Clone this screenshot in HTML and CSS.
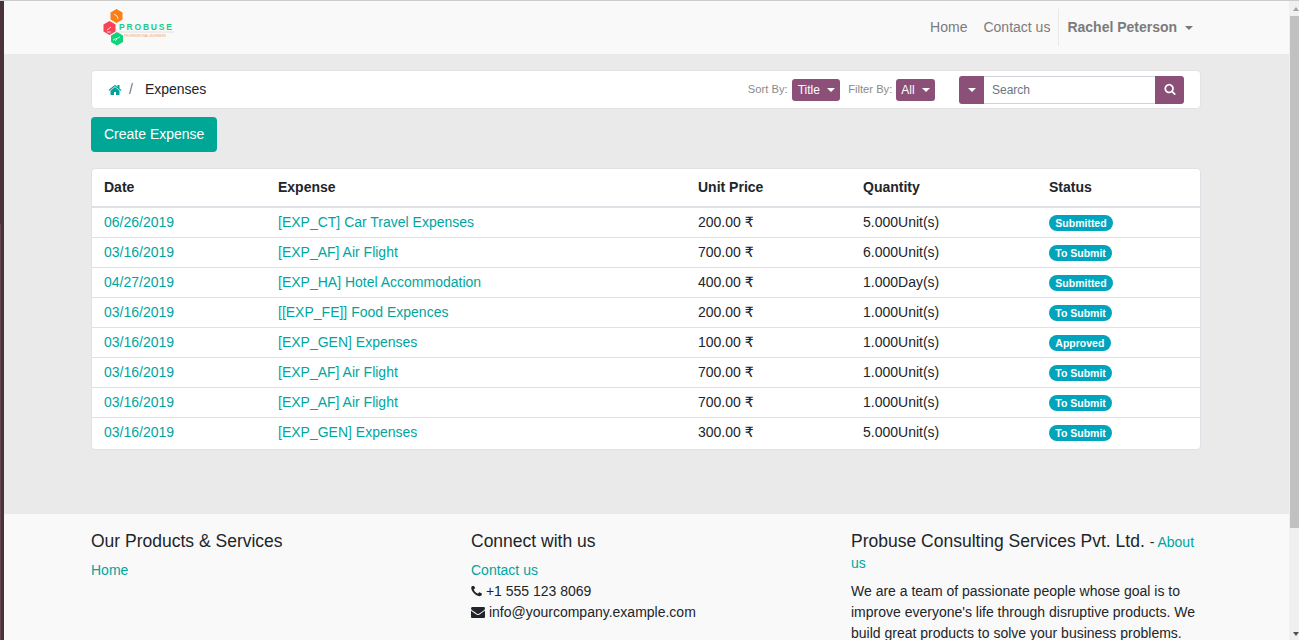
FILE: index.html
```html
<!DOCTYPE html>
<html lang="en">
<head>
  <meta charset="UTF-8">
  <title>Expenses</title>
  <link rel="stylesheet" href="styles.css">
</head>
<body>

<div class="top-edge"></div>
<div class="shell">
  <div class="left-edge"><div class="left-edge-top"></div><div class="left-edge-bottom"></div></div>

  <div class="page">
    <header class="navbar">
      <div class="container navbar-inner">
        <a class="logo" href="#">
          <svg width="72" height="40" viewBox="0 0 72 40">
            <polygon points="13.500,1 19.500,4.500 19.500,11.500 13.500,15 7.500,11.500 7.500,4.500" fill="#fd7e14"/>
            <polygon points="6.500,13 12.500,16.500 12.500,23.500 6.500,27 0.500,23.500 0.500,16.500" fill="#fb4155"/>
            <polygon points="14,24 20,27.500 20,34 14,37.500 8,34 8,27.500" fill="#12d27a"/>
            <path d="M11 6l3 2 1 3M4 22l4-3M4 24h4M10 32l7-3M12 33l2-2" stroke="#fff" stroke-width="1" fill="none" opacity="0.8"/>
            <text class="logo-name" x="16" y="22" textLength="53" lengthAdjust="spacing">PROBUSE</text>
            <line x1="15" y1="24" x2="71" y2="24" stroke="#ddd" stroke-width="0.8"/>
            <text class="logo-tag" x="21" y="28.500" textLength="42" lengthAdjust="spacingAndGlyphs">PROFESSIONAL BUSINESS</text>
          </svg>
        </a>
        <nav class="nav-links">
          <a href="#">Home</a>
          <a href="#">Contact us</a>
          <span class="nav-divider"></span>
          <a class="nav-user" href="#">Rachel Peterson <i class="caret caret-grey"></i></a>
        </nav>
      </div>
    </header>

    <main class="content">
      <div class="container">
        <div class="toolbar">
          <div class="crumbs">
            <svg class="icon-home" viewBox="0 0 1792 1792"><path d="M1472 992v480q0 26-19 45t-45 19h-384v-384h-256v384h-384q-26 0-45-19t-19-45v-480q0-1 .5-3t.5-3l575-474 575 474q1 2 1 6zm223-69l-62 74q-8 9-21 11h-3q-13 0-21-7l-692-577-692 577q-12 8-24 7-13-2-21-11l-62-74q-8-10-7-23.500t11-21.500l719-599q32-26 76-26t76 26l244 204v-195q0-14 9-23t23-9h192q14 0 23 9t9 23v408l219 182q10 8 11 21.500t-7 23.500z"/></svg>
            <span class="crumb-sep">/</span>
            <span>Expenses</span>
          </div>
          <div class="filters">
            <span class="filter-label">Sort By:</span>
            <button class="pill pill-title">Title <i class="caret"></i></button>
            <span class="filter-label filter-second">Filter By:</span>
            <button class="pill">All <i class="caret"></i></button>
          </div>
          <div class="search">
            <button class="search-drop"><i class="caret"></i></button>
            <input class="search-input" type="text" placeholder="Search">
            <button class="search-go">
              <svg class="icon-search" viewBox="0 0 1792 1792"><path d="M1216 832q0-185-131.500-316.500t-316.500-131.500-316.500 131.500-131.500 316.500 131.500 316.500 316.500 131.500 316.500-131.500 131.500-316.500zm512 832q0 52-38 90t-90 38q-54 0-90-38l-343-342q-179 124-399 124-143 0-273.500-55.500t-225-150-150-225-55.500-273.500 55.500-273.500 150-225 225-150 273.500-55.500 273.500 55.500 225 150 150 225 55.500 273.500q0 220-124 399l343 343q37 37 37 90z"/></svg>
            </button>
          </div>
        </div>

        <a class="btn-create" href="#">Create Expense</a>

        <div class="table-card">
          <table class="expenses">
            <colgroup>
              <col class="col-date"><col class="col-name"><col class="col-price"><col class="col-qty"><col>
            </colgroup>
            <thead>
              <tr><th>Date</th><th>Expense</th><th>Unit Price</th><th>Quantity</th><th>Status</th></tr>
            </thead>
            <tbody>
              <tr><td><a href="#">06/26/2019</a></td><td><a href="#">[EXP_CT] Car Travel Expenses</a></td><td>200.00 <span class="rupee">₹</span></td><td>5.000Unit(s)</td><td><span class="badge">Submitted</span></td></tr>
              <tr><td><a href="#">03/16/2019</a></td><td><a href="#">[EXP_AF] Air Flight</a></td><td>700.00 <span class="rupee">₹</span></td><td>6.000Unit(s)</td><td><span class="badge">To Submit</span></td></tr>
              <tr><td><a href="#">04/27/2019</a></td><td><a href="#">[EXP_HA] Hotel Accommodation</a></td><td>400.00 <span class="rupee">₹</span></td><td>1.000Day(s)</td><td><span class="badge">Submitted</span></td></tr>
              <tr><td><a href="#">03/16/2019</a></td><td><a href="#">[[EXP_FE]] Food Expences</a></td><td>200.00 <span class="rupee">₹</span></td><td>1.000Unit(s)</td><td><span class="badge">To Submit</span></td></tr>
              <tr><td><a href="#">03/16/2019</a></td><td><a href="#">[EXP_GEN] Expenses</a></td><td>100.00 <span class="rupee">₹</span></td><td>1.000Unit(s)</td><td><span class="badge">Approved</span></td></tr>
              <tr><td><a href="#">03/16/2019</a></td><td><a href="#">[EXP_AF] Air Flight</a></td><td>700.00 <span class="rupee">₹</span></td><td>1.000Unit(s)</td><td><span class="badge">To Submit</span></td></tr>
              <tr><td><a href="#">03/16/2019</a></td><td><a href="#">[EXP_AF] Air Flight</a></td><td>700.00 <span class="rupee">₹</span></td><td>1.000Unit(s)</td><td><span class="badge">To Submit</span></td></tr>
              <tr><td><a href="#">03/16/2019</a></td><td><a href="#">[EXP_GEN] Expenses</a></td><td>300.00 <span class="rupee">₹</span></td><td>5.000Unit(s)</td><td><span class="badge">To Submit</span></td></tr>
            </tbody>
          </table>
        </div>
      </div>
    </main>

    <footer class="footer">
      <div class="container footer-grid">
        <div class="footer-col">
          <h5>Our Products &amp; Services</h5>
          <a href="#">Home</a>
        </div>
        <div class="footer-col">
          <h5>Connect with us</h5>
          <a href="#">Contact us</a>
          <div>
            <svg class="icon-phone" viewBox="160 200 1450 1450"><path d="M1600 1240q0 27-10 70.500t-21 68.500q-21 50-122 106-94 51-186 51-27 0-53-3.500t-57.500-12.500-47-14.500-55.500-20.500-49-18q-98-35-175-83-127-79-264-216t-216-264q-48-77-83-175-3-9-18-49t-20.500-55.500-14.500-47-12.500-57.500-3.500-53q0-92 51-186 56-101 106-122 25-11 68.500-21t70.500-10q14 0 21 3 18 6 53 76 11 19 30 54t35 63.500 31 53.500q3 4 17.500 25t21.500 35.500 7 28.500q0 20-28.500 50t-62 55-62 53-28.500 46q0 9 5 22.500t8.500 20.500 14 24 11.500 19q76 137 174 235t235 174q2 1 19 11.500t24 14 20.500 8.500 22.500 5q18 0 46-28.500t53-62 55-62 50-28.500q14 0 28.500 7t35.500 21.500 25 17.500q25 15 53.500 31t63.500 35 54 30q70 35 76 53 3 7 3 21z"/></svg>
            +1 555 123 8069
          </div>
          <div>
            <svg class="icon-mail" viewBox="0 0 1792 1792"><path d="M1792 710v794q0 66-47 113t-113 47h-1472q-66 0-113-47t-47-113v-794q44 49 101 87 362 246 497 345 57 42 92.500 65.500t94.500 48 110 24.500h2q51 0 110-24.500t94.500-48 92.500-65.500q170-123 498-345 57-39 100-87zm0-294q0 79-49 151t-122 123q-376 261-468 325-10 7-42.500 30.500t-54 38-52 32.500-57.500 27-50 9h-2q-23 0-50-9t-57.500-27-52-32.500-54-38-42.500-30.500q-91-64-262-182.500t-205-142.500q-62-42-117-115.500t-55-136.500q0-78 41.500-130t118.500-52h1472q65 0 112.500 47t47.500 113z"/></svg>
            info@yourcompany.example.com
          </div>
        </div>
        <div class="footer-col">
          <h5 class="inline-head">Probuse Consulting Services Pvt. Ltd.</h5> - <a class="inline-link" href="#">About us</a>
          <p>We are a team of passionate people whose goal is to improve everyone's life through disruptive products. We build great products to solve your business problems.</p>
        </div>
      </div>
    </footer>
  </div>

  <div class="scrollbar">
    <div class="arrow-up"></div>
    <div class="thumb"></div>
    <div class="arrow-down"></div>
  </div>
</div>

</body>
</html>
```

FILE: styles.css
```css
* {
  box-sizing: border-box;
}
html, body {
  margin: 0;
  height: 640px;
  overflow: hidden;
}
body {
  font-family: "Liberation Sans", Arial, sans-serif;
  font-size: 14px;
  line-height: 21px;
  color: #212529;
  background: #eaeaea;
}
a {
  color: #00a5a0;
  text-decoration: none;
}

/* window edges */
.top-edge {
  height: 1px;
  background: #ccc;
}
.shell {
  display: flex;
  height: 639px;
}
.left-edge {
  width: 4px;
  flex: none;
  display: flex;
  flex-direction: column;
  background: #4a3238;
}
.left-edge-top {
  height: 223px;
}
.left-edge-bottom {
  flex: 1;
  width: 1px;
  background: #63494f;
}
.page {
  width: 1285px;
  flex: none;
  display: flex;
  flex-direction: column;
  overflow: hidden;
}
.container {
  width: 1140px;
  margin-left: 72px;
  padding: 0 15px;
}

/* scrollbar */
.scrollbar {
  width: 10px;
  flex: none;
  display: flex;
  flex-direction: column;
  align-items: flex-end;
  background: #f0f0f0;
}
.arrow-up, .arrow-down {
  width: 0;
  height: 0;
  margin: 6px 0 5px;
  border-left: 3.500px solid transparent;
  border-right: 3.500px solid transparent;
}
.arrow-up {
  border-bottom: 4px solid #a3a3a3;
}
.arrow-down {
  margin: auto 0 4px;
  border-top: 4px solid #505050;
}
.thumb {
  width: 9px;
  height: 512px;
  background: #c1c1c1;
}

/* navbar */
.navbar {
  height: 53px;
  flex: none;
  background: #f9f9f9;
}
.navbar-inner {
  display: flex;
  justify-content: space-between;
  align-items: center;
  height: 53px;
}
.logo {
  display: block;
  height: 40px;
  margin: 0 0 0 12px;
}
.logo-name {
  font-size: 8.500px;
  font-weight: bold;
  fill: #1cc98a;
}
.logo-tag {
  font-size: 4px;
  fill: #f5a65b;
}
.nav-links {
  display: flex;
  align-items: center;
  padding-right: 8px;
}
.nav-links a {
  color: #7b7b7b;
  margin-left: 16px;
}
.nav-divider {
  width: 1px;
  height: 37px;
  margin-left: 8px;
  background: #e9e9e9;
}
.nav-links .nav-user {
  margin-left: 8px;
  font-weight: bold;
}
.caret {
  display: inline-block;
  width: 0;
  height: 0;
  margin-left: 4px;
  vertical-align: 2px;
  border-top: 4px solid #fff;
  border-left: 4px solid transparent;
  border-right: 4px solid transparent;
}
.caret-grey {
  border-top-color: #777;
}

/* breadcrumb bar */
.content {
  flex: 1;
  padding-top: 16px;
}
.toolbar {
  display: flex;
  align-items: center;
  height: 39px;
  background: #fff;
  border: 1px solid #e3e3e6;
  border-radius: 4px;
  padding: 0 16px 0 16px;
}
.crumbs {
  display: flex;
  align-items: center;
  flex: 1;
}
.icon-home {
  width: 14px;
  height: 14px;
  fill: #00a09d;
}
.crumb-sep {
  margin: 0 12px 0 7px;
  color: #6c757d;
}
.filters {
  display: flex;
  align-items: center;
  margin-right: 24px;
}
.filter-label {
  font-size: 11.200px;
  color: #8a8a8a;
  margin-right: 4px;
}
.filter-second {
  margin-left: 8px;
}
.pill {
  height: 22px;
  padding: 0 5px;
  border: none;
  border-radius: 3px;
  font-family: inherit;
  font-size: 12px;
  color: #fff;
  background: #8c5078;
}
.pill-title {
  padding-left: 6px;
}
.search {
  display: flex;
  height: 28px;
}
.search-drop {
  width: 25px;
  padding: 0;
  border: none;
  border-radius: 3px 0 0 3px;
  background: #8c5078;
}
.search-drop .caret {
  margin: 0;
}
.search-input {
  width: 171px;
  padding: 0 8px;
  border: 1px solid #ced4da;
  border-width: 1px 0;
  border-radius: 0;
  font-family: inherit;
  font-size: 12px;
  outline: none;
}
.search-input::placeholder {
  color: #6c757d;
}
.search-go {
  width: 29px;
  padding: 0;
  border: none;
  border-radius: 0 3px 3px 0;
  background: #8c5078;
}
.icon-search {
  width: 12px;
  height: 12px;
  fill: #fff;
  vertical-align: -1px;
}

/* create button */
.btn-create {
  display: inline-block;
  height: 35px;
  margin-top: 8px;
  padding: 7px 13px;
  color: #fff;
  background: #00a696;
  border-radius: 4px;
}

/* table */
.table-card {
  margin-top: 16px;
  background: #fff;
  border: 1px solid #dee2e6;
  border-radius: 4px;
  overflow: hidden;
}
.expenses {
  width: 100%;
  table-layout: fixed;
  border-collapse: collapse;
}
.col-date {
  width: 174px;
}
.col-name {
  width: 420px;
}
.col-price {
  width: 165px;
}
.col-qty {
  width: 186px;
}
.expenses th {
  height: 38px;
  padding: 0 12px;
  text-align: left;
  border-bottom: 2px solid #dee2e6;
}
.expenses td {
  height: 30px;
  padding: 4px 12px;
  vertical-align: top;
  border-bottom: 1px solid #dee2e6;
}
.expenses tr:last-child td {
  height: 31px;
  border-bottom: none;
}
.rupee {
  font-family: "DejaVu Sans", sans-serif;
}
.badge {
  display: inline-block;
  padding: 0 6.300px;
  font-size: 10.500px;
  font-weight: bold;
  line-height: 16px;
  color: #fff;
  background: #00a4bd;
  border-radius: 8px;
}

/* footer */
.footer {
  height: 126px;
  flex: none;
  background: #f9f9f9;
}
.footer-grid {
  display: grid;
  grid-template-columns: 380px 380px 350px;
  padding-top: 17px;
}
.footer-col h5 {
  margin: 0 0 8px;
  font-size: 17.500px;
  font-weight: normal;
  line-height: 21px;
}
.footer-col .inline-head {
  display: inline;
  margin-right: 1px;
}
.footer-col a {
  display: inline-block;
}
.footer-col .inline-link {
  display: inline;
}
.footer-col p {
  margin: 7px 0 0;
}
.icon-phone {
  width: 11px;
  height: 11px;
  fill: #212529;
  vertical-align: -1px;
}
.icon-mail {
  width: 14px;
  height: 14px;
  fill: #212529;
  vertical-align: -2px;
}
```
